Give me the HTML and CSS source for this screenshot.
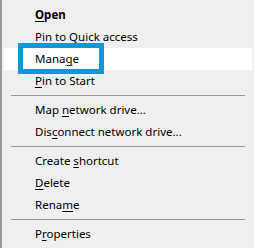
FILE: index.html
```html
<!DOCTYPE html>
<html lang="en">
<head>
  <meta charset="UTF-8">
  <title>Context menu</title>
  <link rel="stylesheet" href="styles.css">
</head>
<body>
  <div class="menu">
    <div class="item bold"><u>O</u>pen</div>
    <div class="item">Pin to Quick access</div>
    <div class="item hover">Mana<u>g</u>e</div>
    <div class="item"><u>P</u>in to Start</div>
    <div class="sep"></div>
    <div class="item">Map <u>n</u>etwork drive...</div>
    <div class="item">Dis<u>c</u>onnect network drive...</div>
    <div class="sep"></div>
    <div class="item">Create <u>s</u>hortcut</div>
    <div class="item"><u>D</u>elete</div>
    <div class="item">Rena<u>m</u>e</div>
    <div class="sep"></div>
    <div class="item">P<u>r</u>operties</div>

    <!-- highlight callout -->
    <div class="callout"></div>
  </div>
</body>
</html>
```

FILE: styles.css
```css
* {
  box-sizing: border-box;
  margin: 0;
  padding: 0;
}

body {
  font-family: 'Noto Sans', 'Open Sans', sans-serif;
  font-size: 11.5px;
  background-color: #efefef;
  color: #000;
}

.menu {
  position: relative;
  height: 248px;
  padding: 4px 2px 0 2px;
  border-left: 2px solid #9a9a9a;
}

.item {
  height: 22px;
  line-height: 22px;
  padding-left: 31px;
  white-space: nowrap;
}

.item u {
  text-underline-offset: 2px;
}

.bold {
  font-weight: bold;
}

.hover {
  background-color: #fff;
}

.sep {
  height: 1px;
  background-color: #999;
  margin: 3px 7px 3px 7px;
}

.callout {
  position: absolute;
  left: 16px;
  top: 43px;
  width: 86px;
  height: 31px;
  border: 5px solid #1296d6;
}
```
